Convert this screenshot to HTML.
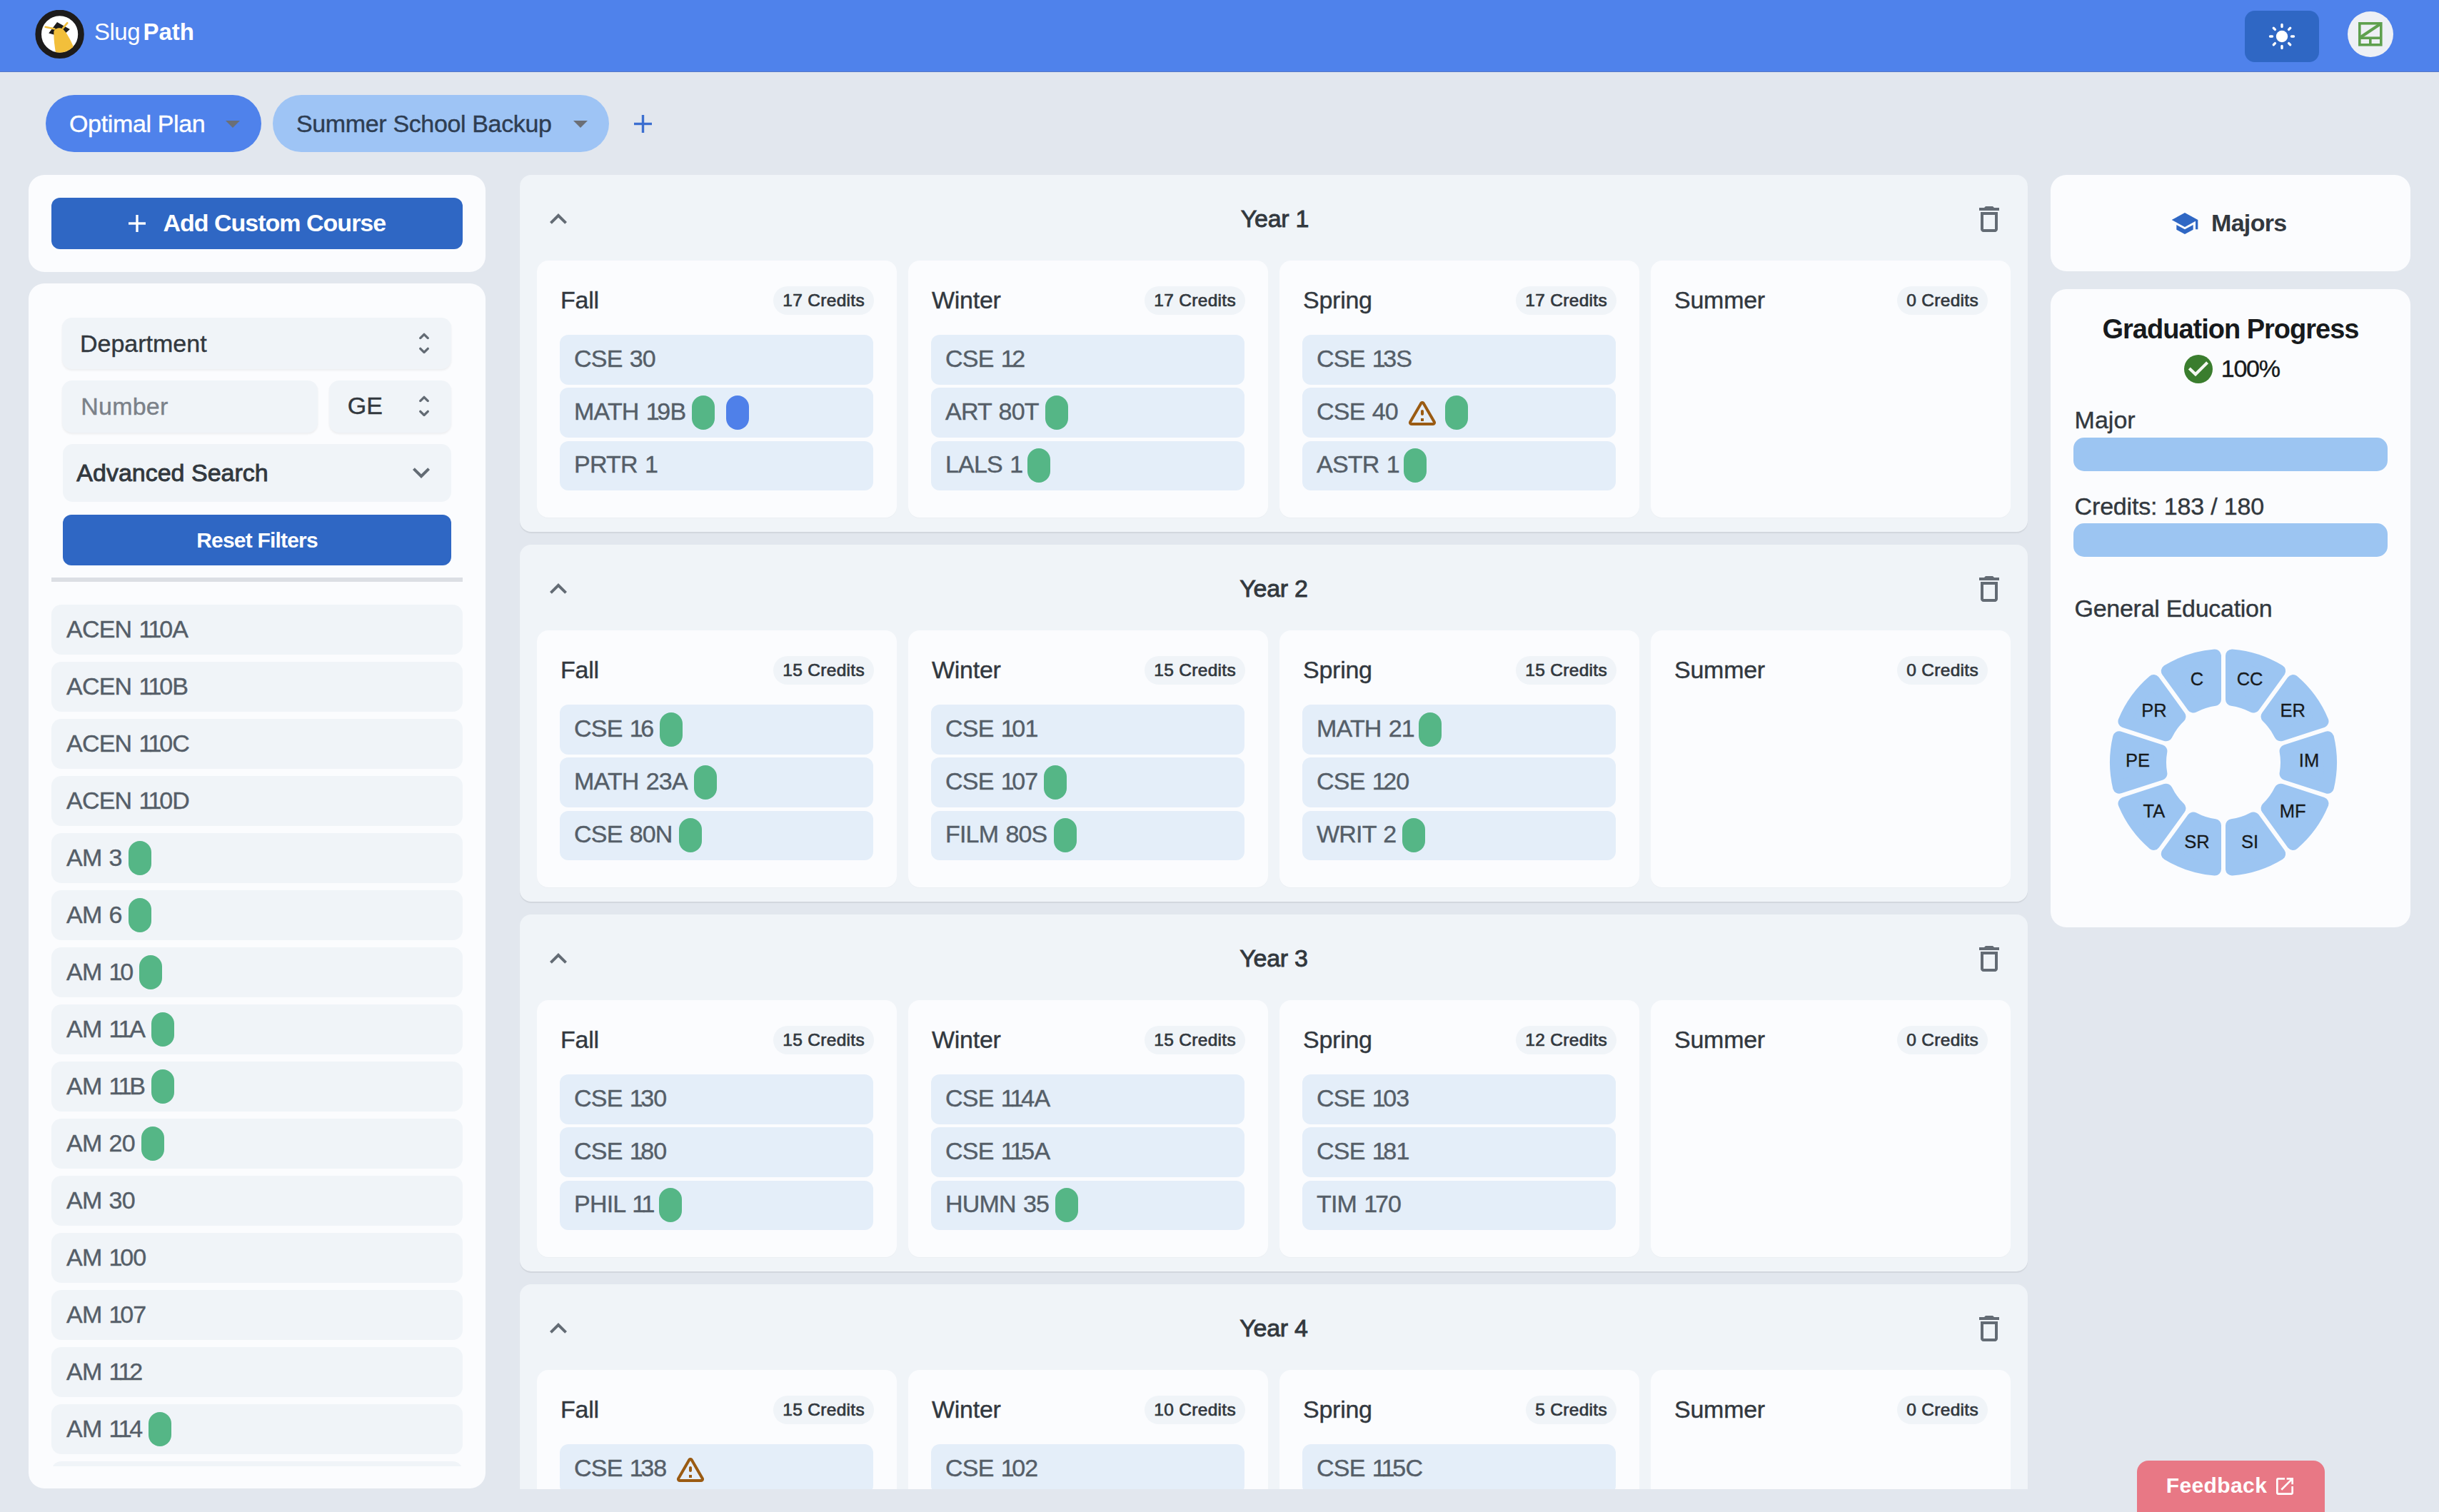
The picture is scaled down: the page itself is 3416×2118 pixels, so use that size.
<!DOCTYPE html>
<html><head><meta charset="utf-8"><title>SlugPath</title>
<style>
*{box-sizing:border-box;margin:0;padding:0}
html,body{width:3416px;height:2118px;overflow:hidden;background:#e2e7ee;font-family:"Liberation Sans",sans-serif;color:#32383e}
.abs{position:absolute}
.t{position:absolute;line-height:1;white-space:nowrap}
.header{position:absolute;left:0;top:0;width:3416px;height:100px;background:#4f82eb;box-shadow:0 1px 0 #5678c6}
.logo{position:absolute;left:49px;top:14px;width:69px;height:69px}
.sunbtn{position:absolute;left:3144px;top:15px;width:104px;height:72px;border-radius:14px;background:#2f67c4}
.avatar{position:absolute;left:3288px;top:16px;width:64px;height:64px;border-radius:50%;background:#eef0f5}
.tab{position:absolute;top:133px;height:80px;border-radius:40px}
.tri{position:absolute;width:0;height:0;border-left:10px solid transparent;border-right:10px solid transparent;border-top:10.5px solid #6b6f76;top:35.5px}
.card{position:absolute;background:#fbfcfe;border-radius:22px}
.pbtn{position:absolute;background:#2f67c4;color:#fff;border-radius:12px}
.field{position:absolute;background:#f0f4f8;border-radius:14px;box-shadow:0 2px 3px rgba(21,21,21,0.06)}
.litem{position:relative;height:70px;margin-bottom:10px;background:#f0f4f8;border-radius:14px;display:flex;align-items:center;padding-left:21px}
.lname{position:relative;top:-1.5px;font-size:34px;line-height:48px;height:48px;color:#555e68;white-space:nowrap;letter-spacing:-0.8px;word-spacing:1.5px;-webkit-text-stroke-width:0.4px;}
.pill{display:inline-block;width:32px;height:48px;border-radius:16px;flex:none}
.year{position:absolute;left:728px;width:2112px;height:500px;background:#f0f4f8;border-radius:16px;box-shadow:0 2px 1px rgba(0,0,0,0.07)}
.chev{position:absolute;left:30px;top:38px;width:48px;height:48px}
.trash{position:absolute;left:2034px;top:38px;width:48px;height:48px}
.quarter{position:absolute;top:120px;width:504px;height:359.5px;background:#fbfcfe;border-radius:16px;box-shadow:0 1px 1px rgba(0,0,0,0.025)}
.credits{position:absolute;right:32px;top:36px;height:40px;line-height:39px;padding:0 13px;border-radius:20px;background:#f0f4f8;color:#32383e;font-size:24.5px;white-space:nowrap;-webkit-text-stroke-width:0.7px;letter-spacing:0.3px}
.courses{position:absolute;left:32px;top:104.05px;width:439px}
.course{height:69.5px;margin-bottom:4.75px;background:#e4eef9;border-radius:12px;display:flex;align-items:center;padding-left:20px}
.one{letter-spacing:-3.3px}
.cname{position:relative;top:-2px;font-size:34px;line-height:48px;height:48px;color:#555e68;white-space:nowrap;letter-spacing:-0.8px;word-spacing:1.5px;-webkit-text-stroke-width:0.4px;}
.warn{flex:none;margin-left:10px;margin-right:-1px}
.clip{position:absolute;left:700px;top:230px;width:2170px;height:1856px;overflow:hidden}
.prog{position:absolute;left:32px;width:440px;height:47px;border-radius:15px;background:#9cc5f2}
.feedback{position:absolute;left:2993px;top:2046px;width:263px;height:110px;border-radius:16px;background:#e87885;color:#fff}
</style>
<script>(function(){var w=window.innerWidth;if(w&&Math.abs(w-3416)>4){document.documentElement.style.zoom=(w/3416);}})();</script>
</head><body>

<div class="header">
  <svg class="logo" viewBox="0 0 69 69">
    <defs><clipPath id="inner"><circle cx="34.6" cy="33.9" r="25.8"/></clipPath></defs>
    <circle cx="34.6" cy="33.9" r="29.9" fill="#fff" stroke="#1d1b1b" stroke-width="8.6"/>
    <path d="M19.2 32.5 L31 17.1 L48.9 26.9 L37 37.5 Z" fill="#1d1b1b"/>
    <g clip-path="url(#inner)">
    <path d="M26.4 30 C 27.5 26.5, 33 24, 38.5 26 C 44 31, 50 42, 54 52 C 48 58, 40 62, 29.4 62 C 27.5 52, 26 40, 26.4 30 Z" fill="#f2bf3b"/>
    </g>
    <path d="M14.6 23.8 L 27.4 26.4" stroke="#f2bf3b" stroke-width="2.6" stroke-linecap="round"/>
    <path d="M45.3 18.2 L 39.2 25.3" stroke="#f2bf3b" stroke-width="2.6" stroke-linecap="round"/>
  </svg>
  <div class="t" style="left:132.00px;top:27.76px;font-size:33px;color:#fff;letter-spacing:-0.5px">Slug</div>
  <div class="t" style="left:200.50px;top:27.76px;font-size:33px;font-weight:700;color:#fff;letter-spacing:0.0px">Path</div>
  <div class="sunbtn">
    <svg width="104" height="72" viewBox="0 0 104 72">
      <circle cx="52" cy="36" r="8.2" fill="#fff"/>
      <g stroke="#fff" stroke-width="3.4" stroke-linecap="round">
        <line x1="52" y1="19.5" x2="52" y2="22.5"/><line x1="52" y1="49.5" x2="52" y2="52.5"/>
        <line x1="35.5" y1="36" x2="38.5" y2="36"/><line x1="65.5" y1="36" x2="68.5" y2="36"/>
        <line x1="40.3" y1="24.3" x2="42.4" y2="26.4"/><line x1="61.6" y1="45.6" x2="63.7" y2="47.7"/>
        <line x1="40.3" y1="47.7" x2="42.4" y2="45.6"/><line x1="61.6" y1="26.4" x2="63.7" y2="24.3"/>
      </g>
    </svg>
  </div>
  <div class="avatar">
    <svg width="64" height="64" viewBox="0 0 64 64">
      <g fill="none" stroke="#5fa04e" stroke-width="3.6">
        <rect x="16.8" y="16.8" width="30" height="30"/>
        <line x1="16.8" y1="37.2" x2="46.8" y2="37.2"/>
        <line x1="31.8" y1="37.2" x2="31.8" y2="46.8"/>
      </g>
      <line x1="17.5" y1="36.5" x2="46" y2="17.5" stroke="#5fa04e" stroke-width="4"/>
    </svg>
  </div>
</div>

<div class="tab" style="left:64px;width:302px;background:#4f82eb">
  <div class="t" style="left:33.00px;top:22.51px;font-size:34px;-webkit-text-stroke-width:0.4px;color:#fff;letter-spacing:-0.36px">Optimal Plan</div>
  <span class="tri" style="left:252px"></span></div>
<div class="tab" style="left:382px;width:471px;background:#9ec4f5">
  <div class="t" style="left:33.00px;top:22.51px;font-size:34px;-webkit-text-stroke-width:0.4px;color:#2e3d52;letter-spacing:-0.36px">Summer School Backup</div>
  <span class="tri" style="left:421px"></span></div>
<svg class="abs" style="left:888px;top:161px" width="25" height="25" viewBox="0 0 25 25"><g stroke="#3c6fd0" stroke-width="3.4"><line x1="12.5" y1="0" x2="12.5" y2="25"/><line x1="0" y1="12.5" x2="25" y2="12.5"/></g></svg>

<!-- left column -->
<div class="card" style="left:40px;top:245px;width:640px;height:136px">
  <div class="pbtn" style="left:32px;top:32px;width:576px;height:72px">
    <svg style="position:absolute;left:108px;top:24px" width="24" height="24" viewBox="0 0 24 24"><g stroke="#fff" stroke-width="3.4"><line x1="12" y1="0" x2="12" y2="24"/><line x1="0" y1="12" x2="24" y2="12"/></g></svg>
    <div class="t" style="left:156.50px;top:18.01px;font-size:34px;font-weight:700;letter-spacing:-1px">Add Custom Course</div>
  </div>
</div>

<div class="card" style="left:40px;top:397px;width:640px;height:1688px">
  <div class="field" style="left:47px;top:48px;width:545px;height:72px">
    <div class="t" style="left:25.00px;top:18.91px;font-size:34px;-webkit-text-stroke-width:0.4px;letter-spacing:0px">Department</div>
    <div style="position:absolute;left:487px;top:16px"><svg viewBox="0 0 24 24" width="40" height="40"><path fill="#636b74" d="m12 5.83 2.46 2.46c.39.39 1.02.39 1.41 0 .39-.39.39-1.02 0-1.41L12.7 3.7a.9959.9959 0 0 0-1.41 0L8.12 6.88c-.39.39-.39 1.02 0 1.41.39.39 1.02.39 1.41 0zm0 12.34-2.46-2.46a.9959.9959 0 0 0-1.41 0c-.39.39-.39 1.02 0 1.41l3.17 3.18c.39.39 1.02.39 1.41 0l3.17-3.17c.39-.39.39-1.02 0-1.41a.9959.9959 0 0 0-1.41 0z"/></svg></div></div>
  <div class="field" style="left:47px;top:136px;width:358px;height:73px">
    <div class="t" style="left:26.30px;top:18.91px;font-size:34px;-webkit-text-stroke-width:0.4px;color:#7b8189;letter-spacing:0.2px">Number</div></div>
  <div class="field" style="left:421px;top:136px;width:171px;height:73px">
    <div class="t" style="left:25.70px;top:18.41px;font-size:34px;-webkit-text-stroke-width:0.4px;">GE</div>
    <div style="position:absolute;left:113px;top:16px"><svg viewBox="0 0 24 24" width="40" height="40"><path fill="#636b74" d="m12 5.83 2.46 2.46c.39.39 1.02.39 1.41 0 .39-.39.39-1.02 0-1.41L12.7 3.7a.9959.9959 0 0 0-1.41 0L8.12 6.88c-.39.39-.39 1.02 0 1.41.39.39 1.02.39 1.41 0zm0 12.34-2.46-2.46a.9959.9959 0 0 0-1.41 0c-.39.39-.39 1.02 0 1.41l3.17 3.18c.39.39 1.02.39 1.41 0l3.17-3.17c.39-.39.39-1.02 0-1.41a.9959.9959 0 0 0-1.41 0z"/></svg></div></div>
  <div class="field" style="left:48px;top:224.7px;width:544px;height:81.6px;box-shadow:none">
    <div class="t" style="left:19.30px;top:23.51px;font-size:34px;-webkit-text-stroke-width:0.9px;">Advanced Search</div>
    <div style="position:absolute;left:478px;top:16.5px"><svg viewBox="0 0 24 24" width="48" height="48"><path fill="#636b74" d="M16.59 8.59 12 13.17 7.41 8.59 6 10l6 6 6-6z"/></svg></div></div>
  <div class="pbtn" style="left:48px;top:324px;width:544px;height:71.3px">
    <div class="t" style="left:0.00px;width:544px;text-align:center;top:20.90px;font-size:30px;font-weight:700;letter-spacing:-0.8px">Reset Filters</div></div>
  <div class="abs" style="left:32px;top:412px;width:576px;height:6px;background:#dcdfe4"></div>
  <div class="abs" style="left:32px;top:450.3px;width:576px;height:1207px;overflow:hidden"><div class="litem"><span class="lname">ACEN <span class="one">1</span><span class="one">1</span>0A</span></div><div class="litem"><span class="lname">ACEN <span class="one">1</span><span class="one">1</span>0B</span></div><div class="litem"><span class="lname">ACEN <span class="one">1</span><span class="one">1</span>0C</span></div><div class="litem"><span class="lname">ACEN <span class="one">1</span><span class="one">1</span>0D</span></div><div class="litem"><span class="lname">AM 3</span><span class="pill" style="background:#55b686;margin-left:9px"></span></div><div class="litem"><span class="lname">AM 6</span><span class="pill" style="background:#55b686;margin-left:9px"></span></div><div class="litem"><span class="lname">AM <span class="one">1</span>0</span><span class="pill" style="background:#55b686;margin-left:9px"></span></div><div class="litem"><span class="lname">AM <span class="one">1</span><span class="one">1</span>A</span><span class="pill" style="background:#55b686;margin-left:9px"></span></div><div class="litem"><span class="lname">AM <span class="one">1</span><span class="one">1</span>B</span><span class="pill" style="background:#55b686;margin-left:9px"></span></div><div class="litem"><span class="lname">AM 20</span><span class="pill" style="background:#55b686;margin-left:9px"></span></div><div class="litem"><span class="lname">AM 30</span></div><div class="litem"><span class="lname">AM <span class="one">1</span>00</span></div><div class="litem"><span class="lname">AM <span class="one">1</span>07</span></div><div class="litem"><span class="lname">AM <span class="one">1</span><span class="one">1</span>2</span></div><div class="litem"><span class="lname">AM <span class="one">1</span><span class="one">1</span>4</span><span class="pill" style="background:#55b686;margin-left:9px"></span></div><div class="litem"><span class="lname">AM <span class="one">1</span>29</span></div></div>
</div>

<!-- year panels -->
<div class="clip">
  <div style="position:absolute;left:-700px;top:-230px">
  <div class="year" style="top:245px">
  <div class="chev"><svg viewBox="0 0 24 24" width="48" height="48"><path fill="#636b74" d="M7.41 15.41 12 10.83l4.59 4.58L18 14l-6-6-6 6z"/></svg></div>
  <div class="t" style="left:0.00px;width:2112px;text-align:center;top:44.21px;font-size:34px;-webkit-text-stroke-width:0.9px;letter-spacing:-0.3px;color:#32383e">Year <span class="one">1</span></div>
  <div class="trash"><svg viewBox="0 0 24 24" width="48" height="48"><path fill="#636b74" d="M6 19c0 1.1.9 2 2 2h8c1.1 0 2-.9 2-2V7H6zM8 9h8v10H8zm7.5-5-1-1h-5l-1 1H5v2h14V4z"/></svg></div>
  <div class="quarter" style="left:24px">
  <div class="t" style="left:33.00px;top:38.21px;font-size:34px;-webkit-text-stroke-width:0.4px;color:#32383e;letter-spacing:-0.26px">Fall</div>
  <div class="credits">17 Credits</div>
  <div class="courses"><div class="course"><span class="cname">CSE 30</span></div><div class="course"><span class="cname">MATH <span class="one">1</span>9B</span><span class="pill" style="background:#55b686;margin-left:9px"></span><span class="pill" style="background:#4f80e9;margin-left:16px"></span></div><div class="course"><span class="cname">PRTR <span class="one">1</span></span></div></div></div><div class="quarter" style="left:544px">
  <div class="t" style="left:33.00px;top:38.21px;font-size:34px;-webkit-text-stroke-width:0.4px;color:#32383e;letter-spacing:-0.26px">Winter</div>
  <div class="credits">17 Credits</div>
  <div class="courses"><div class="course"><span class="cname">CSE <span class="one">1</span>2</span></div><div class="course"><span class="cname">ART 80T</span><span class="pill" style="background:#55b686;margin-left:9px"></span></div><div class="course"><span class="cname">LALS <span class="one">1</span></span><span class="pill" style="background:#55b686;margin-left:9px"></span></div></div></div><div class="quarter" style="left:1064px">
  <div class="t" style="left:33.00px;top:38.21px;font-size:34px;-webkit-text-stroke-width:0.4px;color:#32383e;letter-spacing:-0.26px">Spring</div>
  <div class="credits">17 Credits</div>
  <div class="courses"><div class="course"><span class="cname">CSE <span class="one">1</span>3S</span></div><div class="course"><span class="cname">CSE 40</span><svg class="warn" viewBox="0 0 24 24" width="48" height="48"><path fill="#9a5b13" d="M12 5.99 19.53 19H4.47zM2.74 18c-.77 1.33.19 3 1.73 3h15.06c1.54 0 2.5-1.67 1.73-3L13.73 4.99c-.77-1.33-2.69-1.33-3.46 0zM11 11v2c0 .55.45 1 1 1s1-.45 1-1v-2c0-.55-.45-1-1-1s-1 .45-1 1m0 5h2v2h-2z"/></svg><span class="pill" style="background:#55b686;margin-left:9px"></span></div><div class="course"><span class="cname">ASTR <span class="one">1</span></span><span class="pill" style="background:#55b686;margin-left:9px"></span></div></div></div><div class="quarter" style="left:1584px">
  <div class="t" style="left:33.00px;top:38.21px;font-size:34px;-webkit-text-stroke-width:0.4px;color:#32383e;letter-spacing:-0.26px">Summer</div>
  <div class="credits">0 Credits</div>
  <div class="courses"></div></div>
</div><div class="year" style="top:763px">
  <div class="chev"><svg viewBox="0 0 24 24" width="48" height="48"><path fill="#636b74" d="M7.41 15.41 12 10.83l4.59 4.58L18 14l-6-6-6 6z"/></svg></div>
  <div class="t" style="left:0.00px;width:2112px;text-align:center;top:44.21px;font-size:34px;-webkit-text-stroke-width:0.9px;letter-spacing:-0.3px;color:#32383e">Year 2</div>
  <div class="trash"><svg viewBox="0 0 24 24" width="48" height="48"><path fill="#636b74" d="M6 19c0 1.1.9 2 2 2h8c1.1 0 2-.9 2-2V7H6zM8 9h8v10H8zm7.5-5-1-1h-5l-1 1H5v2h14V4z"/></svg></div>
  <div class="quarter" style="left:24px">
  <div class="t" style="left:33.00px;top:38.21px;font-size:34px;-webkit-text-stroke-width:0.4px;color:#32383e;letter-spacing:-0.26px">Fall</div>
  <div class="credits">15 Credits</div>
  <div class="courses"><div class="course"><span class="cname">CSE <span class="one">1</span>6</span><span class="pill" style="background:#55b686;margin-left:9px"></span></div><div class="course"><span class="cname">MATH 23A</span><span class="pill" style="background:#55b686;margin-left:9px"></span></div><div class="course"><span class="cname">CSE 80N</span><span class="pill" style="background:#55b686;margin-left:9px"></span></div></div></div><div class="quarter" style="left:544px">
  <div class="t" style="left:33.00px;top:38.21px;font-size:34px;-webkit-text-stroke-width:0.4px;color:#32383e;letter-spacing:-0.26px">Winter</div>
  <div class="credits">15 Credits</div>
  <div class="courses"><div class="course"><span class="cname">CSE <span class="one">1</span>0<span class="one">1</span></span></div><div class="course"><span class="cname">CSE <span class="one">1</span>07</span><span class="pill" style="background:#55b686;margin-left:9px"></span></div><div class="course"><span class="cname">FILM 80S</span><span class="pill" style="background:#55b686;margin-left:9px"></span></div></div></div><div class="quarter" style="left:1064px">
  <div class="t" style="left:33.00px;top:38.21px;font-size:34px;-webkit-text-stroke-width:0.4px;color:#32383e;letter-spacing:-0.26px">Spring</div>
  <div class="credits">15 Credits</div>
  <div class="courses"><div class="course"><span class="cname">MATH 2<span class="one">1</span></span><span class="pill" style="background:#55b686;margin-left:9px"></span></div><div class="course"><span class="cname">CSE <span class="one">1</span>20</span></div><div class="course"><span class="cname">WRIT 2</span><span class="pill" style="background:#55b686;margin-left:9px"></span></div></div></div><div class="quarter" style="left:1584px">
  <div class="t" style="left:33.00px;top:38.21px;font-size:34px;-webkit-text-stroke-width:0.4px;color:#32383e;letter-spacing:-0.26px">Summer</div>
  <div class="credits">0 Credits</div>
  <div class="courses"></div></div>
</div><div class="year" style="top:1281px">
  <div class="chev"><svg viewBox="0 0 24 24" width="48" height="48"><path fill="#636b74" d="M7.41 15.41 12 10.83l4.59 4.58L18 14l-6-6-6 6z"/></svg></div>
  <div class="t" style="left:0.00px;width:2112px;text-align:center;top:44.21px;font-size:34px;-webkit-text-stroke-width:0.9px;letter-spacing:-0.3px;color:#32383e">Year 3</div>
  <div class="trash"><svg viewBox="0 0 24 24" width="48" height="48"><path fill="#636b74" d="M6 19c0 1.1.9 2 2 2h8c1.1 0 2-.9 2-2V7H6zM8 9h8v10H8zm7.5-5-1-1h-5l-1 1H5v2h14V4z"/></svg></div>
  <div class="quarter" style="left:24px">
  <div class="t" style="left:33.00px;top:38.21px;font-size:34px;-webkit-text-stroke-width:0.4px;color:#32383e;letter-spacing:-0.26px">Fall</div>
  <div class="credits">15 Credits</div>
  <div class="courses"><div class="course"><span class="cname">CSE <span class="one">1</span>30</span></div><div class="course"><span class="cname">CSE <span class="one">1</span>80</span></div><div class="course"><span class="cname">PHIL <span class="one">1</span><span class="one">1</span></span><span class="pill" style="background:#55b686;margin-left:9px"></span></div></div></div><div class="quarter" style="left:544px">
  <div class="t" style="left:33.00px;top:38.21px;font-size:34px;-webkit-text-stroke-width:0.4px;color:#32383e;letter-spacing:-0.26px">Winter</div>
  <div class="credits">15 Credits</div>
  <div class="courses"><div class="course"><span class="cname">CSE <span class="one">1</span><span class="one">1</span>4A</span></div><div class="course"><span class="cname">CSE <span class="one">1</span><span class="one">1</span>5A</span></div><div class="course"><span class="cname">HUMN 35</span><span class="pill" style="background:#55b686;margin-left:9px"></span></div></div></div><div class="quarter" style="left:1064px">
  <div class="t" style="left:33.00px;top:38.21px;font-size:34px;-webkit-text-stroke-width:0.4px;color:#32383e;letter-spacing:-0.26px">Spring</div>
  <div class="credits">12 Credits</div>
  <div class="courses"><div class="course"><span class="cname">CSE <span class="one">1</span>03</span></div><div class="course"><span class="cname">CSE <span class="one">1</span>8<span class="one">1</span></span></div><div class="course"><span class="cname">TIM <span class="one">1</span>70</span></div></div></div><div class="quarter" style="left:1584px">
  <div class="t" style="left:33.00px;top:38.21px;font-size:34px;-webkit-text-stroke-width:0.4px;color:#32383e;letter-spacing:-0.26px">Summer</div>
  <div class="credits">0 Credits</div>
  <div class="courses"></div></div>
</div><div class="year" style="top:1799px">
  <div class="chev"><svg viewBox="0 0 24 24" width="48" height="48"><path fill="#636b74" d="M7.41 15.41 12 10.83l4.59 4.58L18 14l-6-6-6 6z"/></svg></div>
  <div class="t" style="left:0.00px;width:2112px;text-align:center;top:44.21px;font-size:34px;-webkit-text-stroke-width:0.9px;letter-spacing:-0.3px;color:#32383e">Year 4</div>
  <div class="trash"><svg viewBox="0 0 24 24" width="48" height="48"><path fill="#636b74" d="M6 19c0 1.1.9 2 2 2h8c1.1 0 2-.9 2-2V7H6zM8 9h8v10H8zm7.5-5-1-1h-5l-1 1H5v2h14V4z"/></svg></div>
  <div class="quarter" style="left:24px">
  <div class="t" style="left:33.00px;top:38.21px;font-size:34px;-webkit-text-stroke-width:0.4px;color:#32383e;letter-spacing:-0.26px">Fall</div>
  <div class="credits">15 Credits</div>
  <div class="courses"><div class="course"><span class="cname">CSE <span class="one">1</span>38</span><svg class="warn" viewBox="0 0 24 24" width="48" height="48"><path fill="#9a5b13" d="M12 5.99 19.53 19H4.47zM2.74 18c-.77 1.33.19 3 1.73 3h15.06c1.54 0 2.5-1.67 1.73-3L13.73 4.99c-.77-1.33-2.69-1.33-3.46 0zM11 11v2c0 .55.45 1 1 1s1-.45 1-1v-2c0-.55-.45-1-1-1s-1 .45-1 1m0 5h2v2h-2z"/></svg></div><div class="course"><span class="cname">CSE <span class="one">1</span>85</span></div></div></div><div class="quarter" style="left:544px">
  <div class="t" style="left:33.00px;top:38.21px;font-size:34px;-webkit-text-stroke-width:0.4px;color:#32383e;letter-spacing:-0.26px">Winter</div>
  <div class="credits">10 Credits</div>
  <div class="courses"><div class="course"><span class="cname">CSE <span class="one">1</span>02</span></div><div class="course"><span class="cname">CSE <span class="one">1</span><span class="one">1</span>0</span></div></div></div><div class="quarter" style="left:1064px">
  <div class="t" style="left:33.00px;top:38.21px;font-size:34px;-webkit-text-stroke-width:0.4px;color:#32383e;letter-spacing:-0.26px">Spring</div>
  <div class="credits">5 Credits</div>
  <div class="courses"><div class="course"><span class="cname">CSE <span class="one">1</span><span class="one">1</span>5C</span></div></div></div><div class="quarter" style="left:1584px">
  <div class="t" style="left:33.00px;top:38.21px;font-size:34px;-webkit-text-stroke-width:0.4px;color:#32383e;letter-spacing:-0.26px">Summer</div>
  <div class="credits">0 Credits</div>
  <div class="courses"></div></div>
</div>
  </div>
</div>

<!-- right column -->
<div class="card" style="left:2872px;top:245px;width:504px;height:135px">
  <svg class="abs" style="left:167.6px;top:48px" width="40" height="40" viewBox="0 0 24 24"><path fill="#2f67c4" d="M5 13.18v4L12 21l7-3.82v-4L12 17zM12 3 1 9l11 6 9-4.91V17h2V9z"/></svg>
  <div class="t" style="left:225.00px;top:49.91px;font-size:34px;font-weight:700;letter-spacing:-0.68px">Majors</div>
</div>

<div class="card" style="left:2872px;top:405px;width:504px;height:894px">
  <div class="t" style="left:0.00px;width:504px;text-align:center;top:37.03px;font-size:38px;font-weight:700;letter-spacing:-1px;color:#171a1c">Graduation Progress</div>
  <svg class="abs" style="left:187px;top:91.7px" width="40" height="40" viewBox="0 0 40 40"><circle cx="20" cy="20" r="20" fill="#3a7d2e"/><path d="M7.3 19 L16 27.3 L32.6 10.8" fill="none" stroke="#f4f8f2" stroke-width="4.2"/></svg>
  <div class="t" style="left:238.70px;top:94.21px;font-size:34px;-webkit-text-stroke-width:0.4px;letter-spacing:-1.2px;color:#171a1c">100%</div>
  <div class="t" style="left:33.60px;top:166.21px;font-size:34px;-webkit-text-stroke-width:0.4px;">Major</div>
  <div class="prog" style="top:208px"></div>
  <div class="t" style="left:33.60px;top:286.81px;font-size:34px;-webkit-text-stroke-width:0.4px;letter-spacing:-0.17px">Credits: 183 / 180</div>
  <div class="prog" style="top:328px"></div>
  <div class="t" style="left:33.60px;top:429.71px;font-size:34px;-webkit-text-stroke-width:0.4px;letter-spacing:-0.29px">General Education</div>
  <div class="abs" style="left:82.4px;top:503.4px"><svg class="donut" width="320" height="320" viewBox="0 0 320 320"><path d="M172.00,10.48 A150,150 0 0 1 238.18,31.98 L202.13,81.60 A89,89 0 0 0 172.00,71.81 Z" fill="#9cc5f2" stroke="#9cc5f2" stroke-width="18" stroke-linejoin="round"/><path d="M257.59,46.09 A150,150 0 0 1 298.49,102.38 L240.16,121.34 A89,89 0 0 0 221.54,95.71 Z" fill="#9cc5f2" stroke="#9cc5f2" stroke-width="18" stroke-linejoin="round"/><path d="M305.91,125.21 A150,150 0 0 1 305.91,194.79 L247.58,175.84 A89,89 0 0 0 247.58,144.16 Z" fill="#9cc5f2" stroke="#9cc5f2" stroke-width="18" stroke-linejoin="round"/><path d="M298.49,217.62 A150,150 0 0 1 257.59,273.91 L221.54,224.29 A89,89 0 0 0 240.16,198.66 Z" fill="#9cc5f2" stroke="#9cc5f2" stroke-width="18" stroke-linejoin="round"/><path d="M238.18,288.02 A150,150 0 0 1 172.00,309.52 L172.00,248.19 A89,89 0 0 0 202.13,238.40 Z" fill="#9cc5f2" stroke="#9cc5f2" stroke-width="18" stroke-linejoin="round"/><path d="M148.00,309.52 A150,150 0 0 1 81.82,288.02 L117.87,238.40 A89,89 0 0 0 148.00,248.19 Z" fill="#9cc5f2" stroke="#9cc5f2" stroke-width="18" stroke-linejoin="round"/><path d="M62.41,273.91 A150,150 0 0 1 21.51,217.62 L79.84,198.66 A89,89 0 0 0 98.46,224.29 Z" fill="#9cc5f2" stroke="#9cc5f2" stroke-width="18" stroke-linejoin="round"/><path d="M14.09,194.79 A150,150 0 0 1 14.09,125.21 L72.42,144.16 A89,89 0 0 0 72.42,175.84 Z" fill="#9cc5f2" stroke="#9cc5f2" stroke-width="18" stroke-linejoin="round"/><path d="M21.51,102.38 A150,150 0 0 1 62.41,46.09 L98.46,95.71 A89,89 0 0 0 79.84,121.34 Z" fill="#9cc5f2" stroke="#9cc5f2" stroke-width="18" stroke-linejoin="round"/><path d="M81.82,31.98 A150,150 0 0 1 148.00,10.48 L148.00,71.81 A89,89 0 0 0 117.87,81.60 Z" fill="#9cc5f2" stroke="#9cc5f2" stroke-width="18" stroke-linejoin="round"/><g font-family="Liberation Sans, sans-serif" font-size="25.5" fill="#171a1c" stroke="#171a1c" stroke-width="0.3"><text x="197.1" y="51.9" text-anchor="middle">CC</text><text x="257.1" y="95.5" text-anchor="middle">ER</text><text x="280.0" y="166.0" text-anchor="middle">IM</text><text x="257.1" y="236.5" text-anchor="middle">MF</text><text x="197.1" y="280.1" text-anchor="middle">SI</text><text x="122.9" y="280.1" text-anchor="middle">SR</text><text x="62.9" y="236.5" text-anchor="middle">TA</text><text x="40.0" y="166.0" text-anchor="middle">PE</text><text x="62.9" y="95.5" text-anchor="middle">PR</text><text x="122.9" y="51.9" text-anchor="middle">C</text></g></svg></div>
</div>

<div class="feedback">
  <div class="t" style="left:40.70px;top:20.40px;font-size:30px;font-weight:700;letter-spacing:0.4px">Feedback</div>
  <svg class="abs" style="left:191px;top:20px" width="32" height="32" viewBox="0 0 24 24"><path fill="#fff" d="M19 19H5V5h7V3H5c-1.11 0-2 .9-2 2v14c0 1.1.89 2 2 2h14c1.1 0 2-.9 2-2v-7h-2zM14 3v2h3.59l-9.83 9.83 1.41 1.41L19 6.41V10h2V3z"/></svg>
</div>

</body></html>
